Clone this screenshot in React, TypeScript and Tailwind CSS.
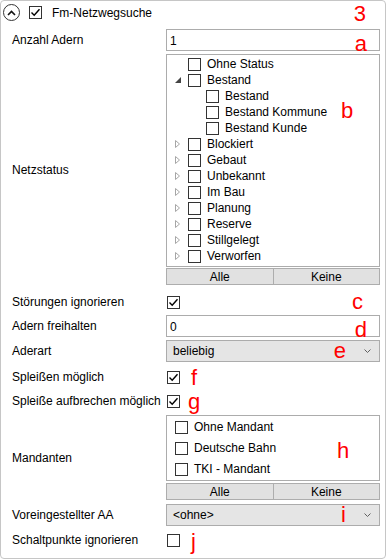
import React from 'react';

const font = { fontFamily: '"Liberation Sans", Arial, sans-serif' };

const Check = ({ checked = false }: { checked?: boolean }) => (
  <span className="w-[13px] h-[13px] border border-[#333333] bg-white flex items-center justify-center shrink-0">
    {checked && (
      <svg width="11" height="11" viewBox="0 0 11 11">
        <path d="M1.5 5.5 L4.2 8.2 L9.5 2.2" fill="none" stroke="#000" strokeWidth="1.4" />
      </svg>
    )}
  </span>
);

const Red = ({ children, className = '' }: { children: React.ReactNode; className?: string }) => (
  <span className={`text-[#ff0000] text-[22px] leading-none ${className}`}>{children}</span>
);

const Label = ({ children }: { children: React.ReactNode }) => (
  <div className="w-[165px] pl-[11px] shrink-0 text-[12px] text-black whitespace-nowrap">{children}</div>
);

const TreeItem = ({ text, level = 0, arrow }: { text: string; level?: number; arrow?: 'open' | 'closed' }) => (
  <div className="h-[16px] flex items-center">
    <span className="w-[21px] flex justify-center">
      {arrow === 'open' && (
        <svg width="6" height="6" viewBox="0 0 6 6"><path d="M6 0 L6 6 L0 6 Z" fill="#444" /></svg>
      )}
      {arrow === 'closed' && (
        <svg width="5" height="8" viewBox="0 0 5 8"><path d="M0.5 0.5 L4.5 4 L0.5 7.5 Z" fill="none" stroke="#a6a6a6" /></svg>
      )}
    </span>
    <span style={{ width: level * 18 }} />
    <Check />
    <span className="ml-[6px] text-[12px] text-black">{text}</span>
  </div>
);

const Buttons = () => (
  <div className="flex h-[17px] text-[12px] text-black">
    <div className="flex-1 bg-[#e1e1e1] border border-[#adadad] flex items-center justify-center">Alle</div>
    <div className="flex-1 bg-[#e1e1e1] border border-[#adadad] border-l-0 flex items-center justify-center">Keine</div>
  </div>
);

const Combo = ({ value, red }: { value: string; red: string }) => (
  <div className="h-[22px] bg-[#e5e5e5] border border-[#acacac] flex items-center pl-[6px] pr-[8px]">
    <span className="text-[12px] text-black flex-1">{value}</span>
    <Red className="mr-[18px]">{red}</Red>
    <svg width="7" height="4" viewBox="0 0 7 4"><path d="M0.5 0.5 L3.5 3.5 L6.5 0.5" fill="none" stroke="#606060" /></svg>
  </div>
);

const Text = ({ value, red }: { value: string; red: string }) => (
  <div className="h-[22px] bg-white border border-[#acacac] flex items-start pl-[3px] pt-[2px] pr-[12px]">
    <span className="text-[12px] text-black flex-1">{value}</span>
    <Red className="mt-[1px]">{red}</Red>
  </div>
);

export default function App() {
  const top = ['Blockiert', 'Gebaut', 'Unbekannt', 'Im Bau', 'Planung', 'Reserve', 'Stillgelegt', 'Verworfen'];
  return (
    <div style={font} className="w-[387px] h-[560px] bg-white">
      <div className="h-[559px] w-[386px] border border-[#c6c6c6] rounded-[4px] flex flex-col">
        {/* header */}
        <div className="h-[23px] flex items-center pl-[2px] pr-[19px]">
          <span className="w-[17px] h-[17px] rounded-full border border-[#333] flex items-center justify-center">
            <svg width="9" height="6" viewBox="0 0 9 6"><path d="M1 5 L4.5 1.5 L8 5" fill="none" stroke="#111" strokeWidth="1.6" /></svg>
          </span>
          <span className="ml-[9px]"><Check checked /></span>
          <span className="ml-[10px] text-[12px] text-black flex-1">Fm-Netzwegsuche</span>
          <Red className="mt-[3px]">3</Red>
        </div>

        <div className="flex items-center mt-[5px]">
          <Label>Anzahl Adern</Label>
          <div className="w-[214px]"><Text value="1" red="a" /></div>
        </div>

        <div className="flex items-center mt-[3px]">
          <Label>Netzstatus</Label>
          <div className="w-[214px] flex flex-col gap-[1px]">
            <div className="h-[213px] border border-[#acacac] bg-white pt-[1px] relative">
              <TreeItem text="Ohne Status" />
              <TreeItem text="Bestand" arrow="open" />
              <TreeItem text="Bestand" level={1} />
              <TreeItem text="Bestand Kommune" level={1} />
              <TreeItem text="Bestand Kunde" level={1} />
              {top.map(t => <TreeItem key={t} text={t} arrow="closed" />)}
              <Red className="absolute left-[174px] top-[45px]">b</Red>
            </div>
            <Buttons />
          </div>
        </div>

        <div className="flex items-center h-[20px] mt-[7px]">
          <Label>Störungen ignorieren</Label>
          <div className="w-[214px] flex items-center pl-[1px] pr-[17px]">
            <Check checked />
            <span className="flex-1" />
            <Red>c</Red>
          </div>
        </div>

        <div className="flex items-center mt-[3px]">
          <Label>Adern freihalten</Label>
          <div className="w-[214px]"><Text value="0" red="d" /></div>
        </div>

        <div className="flex items-center mt-[3px]">
          <Label>Aderart</Label>
          <div className="w-[214px]"><Combo value="beliebig" red="e" /></div>
        </div>

        <div className="flex items-center h-[22px] mt-[4px]">
          <Label>Spleißen möglich</Label>
          <div className="flex items-center pl-[1px]">
            <Check checked />
            <Red className="ml-[11px] mt-[2px]">f</Red>
          </div>
        </div>

        <div className="flex items-center h-[22px] mt-[2px]">
          <Label>Spleiße aufbrechen möglich</Label>
          <div className="flex items-center pl-[1px]">
            <Check checked />
            <Red className="ml-[8px] mt-[2px]">g</Red>
          </div>
        </div>

        <div className="flex items-center mt-[3px]">
          <Label>Mandanten</Label>
          <div className="w-[214px] flex flex-col gap-[2px]">
            <div className="h-[66px] border border-[#acacac] bg-white flex flex-col justify-center gap-[8px] pl-[8px] relative">
              {['Ohne Mandant', 'Deutsche Bahn', 'TKI - Mandant'].map(t => (
                <div key={t} className="flex items-center h-[13px]">
                  <Check />
                  <span className="ml-[6px] text-[12px] text-black">{t}</span>
                </div>
              ))}
              <Red className="absolute left-[170px] top-[24px]">h</Red>
            </div>
            <Buttons />
          </div>
        </div>

        <div className="flex items-center mt-[4px]">
          <Label>Voreingestellter AA</Label>
          <div className="w-[214px]"><Combo value="<ohne>" red="i" /></div>
        </div>

        <div className="flex items-center h-[22px] mt-[3px]">
          <Label>Schaltpunkte ignorieren</Label>
          <div className="flex items-center pl-[1px]">
            <Check />
            <Red className="ml-[11px] mt-[3px]">j</Red>
          </div>
        </div>
      </div>
    </div>
  );
}
